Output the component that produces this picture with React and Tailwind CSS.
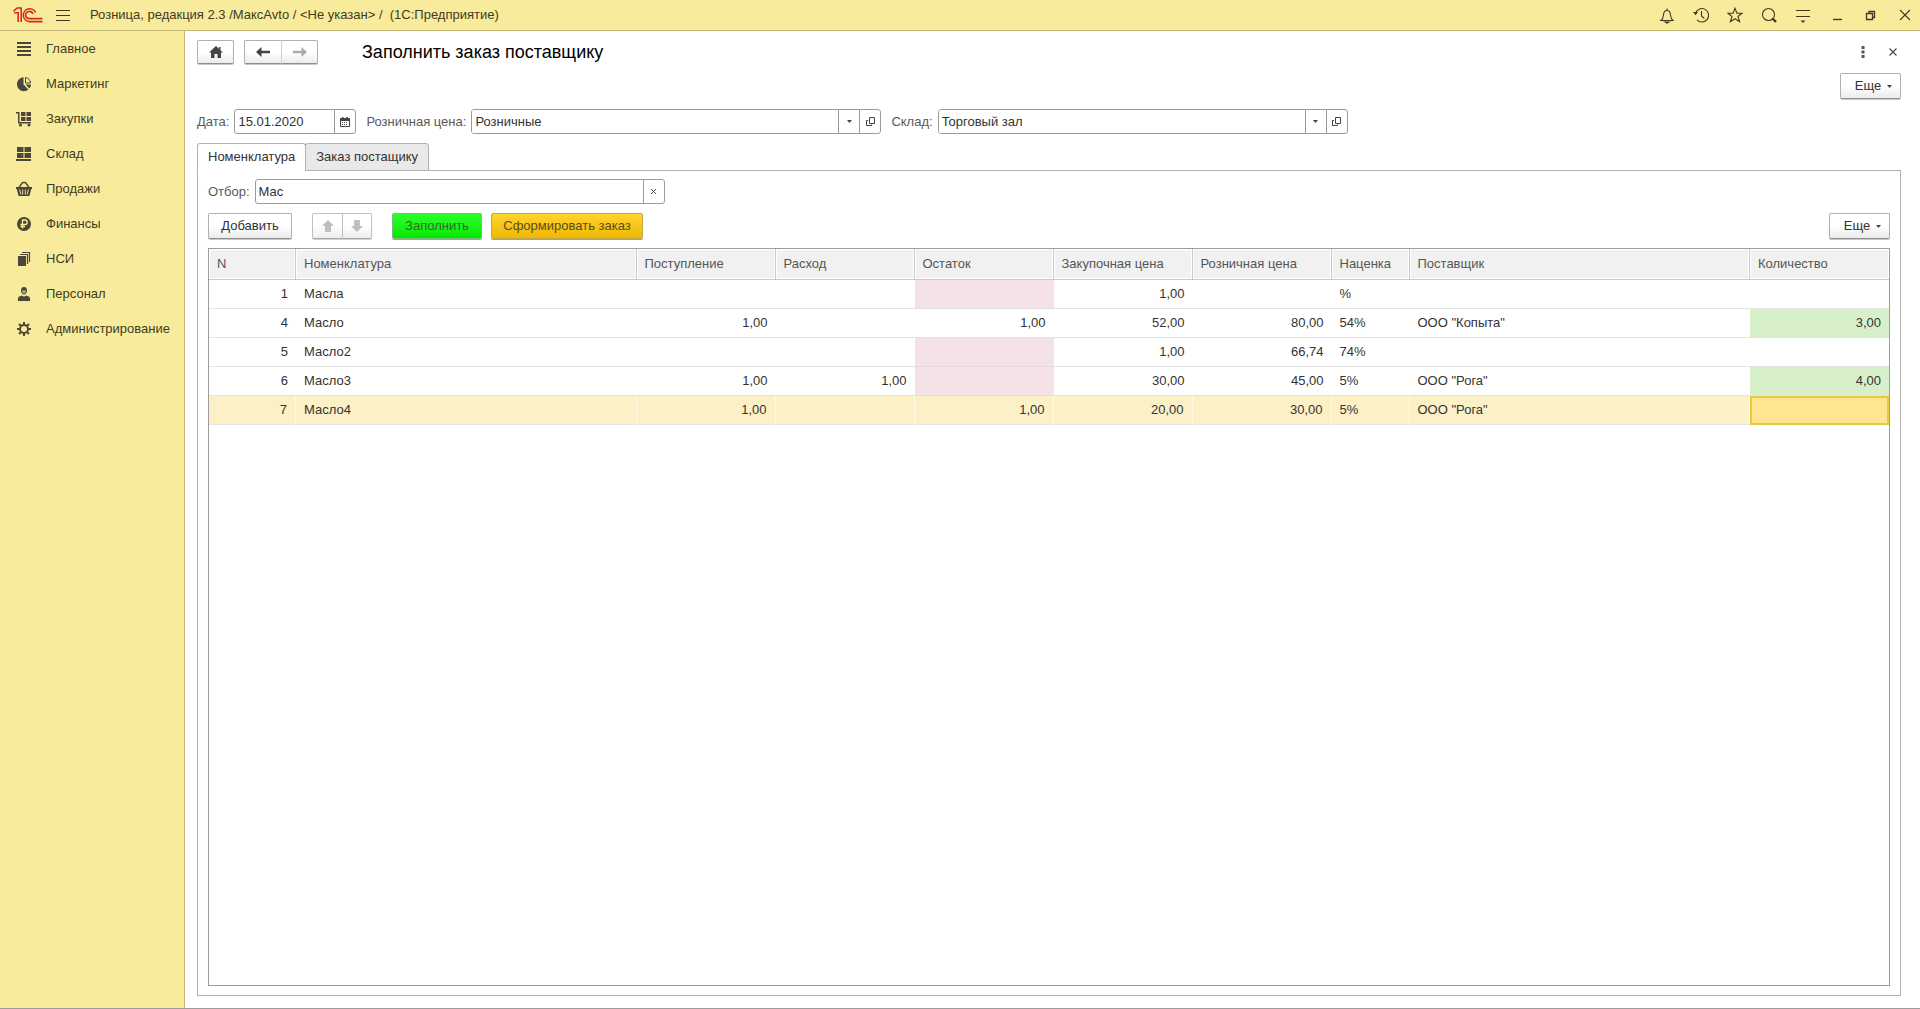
import React, { useState } from "react";

const NAV_ITEMS = [
  { id: "main", label: "Главное" },
  { id: "marketing", label: "Маркетинг" },
  { id: "purchases", label: "Закупки" },
  { id: "stock", label: "Склад" },
  { id: "sales", label: "Продажи" },
  { id: "finance", label: "Финансы" },
  { id: "nsi", label: "НСИ" },
  { id: "staff", label: "Персонал" },
  { id: "admin", label: "Администрирование" },
];

// Columns without a width share whatever space is left
const COLUMNS = [
  { key: "n", label: "N", width: "w-[87px]", num: true },
  { key: "name", label: "Номенклатура", width: "" },
  { key: "income", label: "Поступление", width: "w-[139px]", num: true },
  { key: "outcome", label: "Расход", width: "w-[139px]", num: true },
  { key: "rest", label: "Остаток", width: "w-[139px]", num: true },
  { key: "buy", label: "Закупочная цена", width: "w-[139px]", num: true },
  { key: "retail", label: "Розничная цена", width: "w-[139px]", num: true },
  { key: "markup", label: "Наценка", width: "w-[78px]" },
  { key: "vendor", label: "Поставщик", width: "" },
  { key: "qty", label: "Количество", width: "w-[139px]", num: true },
];

const ROWS = [
  { n: "1", name: "Масла", buy: "1,00", markup: "%" },
  { n: "4", name: "Масло", income: "1,00", rest: "1,00", buy: "52,00", retail: "80,00", markup: "54%", vendor: 'ООО "Копыта"', qty: "3,00" },
  { n: "5", name: "Масло2", buy: "1,00", retail: "66,74", markup: "74%" },
  { n: "6", name: "Масло3", income: "1,00", outcome: "1,00", buy: "30,00", retail: "45,00", markup: "5%", vendor: 'ООО "Рога"', qty: "4,00" },
  { n: "7", name: "Масло4", income: "1,00", rest: "1,00", buy: "20,00", retail: "30,00", markup: "5%", vendor: 'ООО "Рога"' },
];

const BTN =
  "flex items-center justify-center border border-[#b0b0b0] border-b-[#8f8f8f] bg-linear-to-b from-white from-50% to-[#ebebeb] shadow-[0_1px_0_#c8c8c8] cursor-pointer";

const FIELD = "flex h-[25px] items-stretch overflow-hidden rounded-[3px] border border-[#9c9c9c] bg-white";

function Logo() {
  return (
    <svg width="30" height="16" viewBox="0 0 30 16" fill="none" stroke="#d5281f" strokeWidth="1.6">
      <path d="M0.5 4.2 4.2 1H8.2V15" />
      <path d="M1.2 5.8H5.2V15" />
      <path d="M22.6 5.6A6.4 6.4 0 1 0 16.6 14.6H29.5" />
      <path d="M19.8 7A3.6 3.6 0 1 0 16.6 11.6H29.5" />
    </svg>
  );
}

function NavIcon({ id }) {
  const common = { width: 16, height: 16, viewBox: "0 0 16 16", fill: "#4b4739", "aria-hidden": true };
  switch (id) {
    case "main":
      return (
        <svg {...common}>
          <path d="M1 1h14v2H1zM1 5h14v2H1zM1 9h14v2H1zM1 13h14v2H1z" />
        </svg>
      );
    case "marketing":
      return (
        <svg {...common}>
          <path d="M7.5 1.2V8.6L12.4 13.6A7 7 0 1 1 7.500 1.200z" />
          <path d="M9.500 1.500A6 6 0 0 1 14.500 7H9.500z" fill="none" stroke="#4b4739" />
          <path d="M9.500 8.500H15A6.500 6.500 0 0 1 13.400 12.500z" />
        </svg>
      );
    case "purchases":
      return (
        <svg {...common}>
          <path d="M0 1h3.500v10H15v1.500H2V2.500H0z" />
          <path d="M5 1h4.500v4H5zM10.500 1H15v4h-4.500zM5 6h4.500v4H5zM10.500 6H15v4h-4.500z" />
          <circle cx="4.500" cy="14" r="1.500" />
          <circle cx="13" cy="14" r="1.500" />
        </svg>
      );
    case "stock":
      return (
        <svg {...common}>
          <path d="M1 1h6.500v5H1zM8.500 1H15v5H8.500zM1 7h6.500v5H1zM8.500 7H15v5H8.500zM0 13h15v2H0z" />
        </svg>
      );
    case "sales":
      return (
        <svg {...common}>
          <path d="M0 6h16v2h-.800L13.500 15h-11L.800 8H0z" />
          <path d="M3 6.500 6.500 1.500h3L13 6.500" fill="none" stroke="#4b4739" strokeWidth="1.400" />
          <path d="M3.500 8.500 5 13.500M6.700 8.500V13.500M9.300 8.500V13.500M12.500 8.500 11 13.500" stroke="#f9eb9c" strokeWidth="0.900" />
        </svg>
      );
    case "finance":
      return (
        <svg {...common}>
          <circle cx="8" cy="8" r="7" />
          <path d="M6.500 12.500V4H9a2.200 2.200 0 0 1 0 4.500H4.500M4.500 10.500H9" fill="none" stroke="#f9eb9c" strokeWidth="1.300" />
        </svg>
      );
    case "nsi":
      return (
        <svg {...common}>
          <path d="M2 5h8v10H2z" />
          <path d="M4 3.500h7.500V13M6 1.500h7.500V11" fill="none" stroke="#4b4739" strokeWidth="1.200" />
        </svg>
      );
    case "staff":
      return (
        <svg {...common}>
          <path d="M8 1C6 1 5 2.400 5 4.500S6.400 8.500 8 8.500s3-1.900 3-4S10 1 8 1z" />
          <path d="M6 4.500h4C10 6.500 9 7.600 8 7.600S6 6.500 6 4.500z" fill="#b5ac78" />
          <path d="M2 15v-2.500C2 10.500 4 10 6 9.500l2 1.200 2-1.200c2 .500 4 1 4 3V15z" />
        </svg>
      );
    default:
      return (
        <svg {...common} fill="none" stroke="#4b4739">
          <circle cx="8" cy="8" r="4" strokeWidth="2" />
          <path
            d="M8 1v2.500M8 12.500V15M1 8h2.500M12.500 8H15M3 3l1.800 1.800M11.200 11.200 13 13M3 13l1.800-1.800M11.200 4.800 13 3"
            strokeWidth="2"
          />
        </svg>
      );
  }
}

// Thin line icons on the right of the title bar
const TITLE_ICONS = [
  {
    label: "Уведомления",
    path: (
      <>
        <path d="M2 13.500h12c-2-1.500-2.300-3-2.500-5.500C11.300 5 10.500 3.500 8 3.500S4.700 5 4.500 8C4.300 10.500 4 12 2 13.500zM8 3.500V1.500" />
        <path d="M6 15h4l-2 1.200z" fill="#3f3b20" />
      </>
    ),
  },
  {
    label: "История",
    path: (
      <>
        <path d="M2.600 6A6.700 6.700 0 1 1 4 12.800M8.500 4v5l2.800 2.500" />
        <path d="M0 5h5L2.600 8.200z" fill="#3f3b20" stroke="none" />
      </>
    ),
  },
  { label: "Избранное", path: <path d="M8 1.200l1.900 5h5.300l-4.200 3.300 1.600 5.300L8 11.700l-4.600 3.100L5 9.500.800 6.200h5.300z" /> },
  {
    label: "Поиск",
    path: (
      <>
        <circle cx="7.500" cy="7.500" r="6" />
        <path d="M11.500 11.500 15 15" strokeWidth="2.400" />
      </>
    ),
  },
  {
    label: "Настройки панели",
    path: (
      <>
        <path d="M1 3.500h14M1 9.500h14" />
        <path d="M5.500 13.500h5L8 16z" fill="#3f3b20" stroke="none" />
      </>
    ),
  },
  { label: "Свернуть", path: <path d="M4 12.500h9" strokeWidth="1.400" /> },
  { label: "Восстановить", path: <path d="M3.500 6.500h6v6h-6zM6 6V4.500h5.500v6H10" strokeWidth="1.300" /> },
  { label: "Закрыть", path: <path d="M3 3l10 10M13 3 3 13" /> },
];

function Caret() {
  return (
    <svg width="5" height="3" viewBox="0 0 5 3" fill="#444" aria-hidden="true">
      <path d="M0 0h5L2.500 3z" />
    </svg>
  );
}

function OpenIcon() {
  return (
    <svg width="11" height="11" viewBox="0 0 11 11" fill="none" stroke="#444" aria-hidden="true">
      <path d="M4.500 1.500h5v6h-5zM3 4.500H1.500v5h5V8.500" />
    </svg>
  );
}

function Arrow({ className = "" }) {
  return (
    <svg className={className} width="14" height="10" viewBox="0 0 14 10" fill="currentColor" aria-hidden="true">
      <path d="M0 5 5.500 0V3.800H14V6.200H5.500V10z" />
    </svg>
  );
}

function BlockArrow({ className = "" }) {
  return (
    <svg className={className} width="12" height="12" viewBox="0 0 12 12" fill="#a9b1b8" aria-hidden="true">
      <path d="M6 0 12 6H9v6H3V6H0z" />
    </svg>
  );
}

function MoreButton() {
  return (
    <button type="button" className={`${BTN} h-[26px] w-[61px] gap-[6px] rounded-[2px] pl-[6px]`}>
      Еще
      <Caret />
    </button>
  );
}

function SelectField({ id, label, value }) {
  return (
    <div className="flex items-center">
      <label htmlFor={id} className="w-max pr-[5px] text-[#5a5a5a]">
        {label}
      </label>
      <div className={`${FIELD} w-[410px]`}>
        <div className="relative flex flex-1">
          <select id={id} defaultValue={value} className="w-full appearance-none bg-white pl-[3px] outline-none">
            <option>{value}</option>
          </select>
          <span className="pointer-events-none absolute inset-y-0 right-0 flex w-[21px] items-center justify-center border-l border-[#9c9c9c]">
            <Caret />
          </span>
        </div>
        <button type="button" aria-label="Открыть" className="flex w-[21px] items-center justify-center border-l border-[#9c9c9c]">
          <OpenIcon />
        </button>
      </div>
    </div>
  );
}

function TitleBar() {
  return (
    <header className="flex h-[31px] shrink-0 items-center border-b border-[#c3b878] bg-[#f9eb9c] pl-[13px] pr-[7px]">
      <Logo />
      <button type="button" aria-label="Меню" className="ml-[13px] flex w-[14px] flex-col gap-1">
        <span className="h-px bg-[#3f3b20]" />
        <span className="h-px bg-[#3f3b20]" />
        <span className="h-px bg-[#3f3b20]" />
      </button>
      <span className="ml-5 whitespace-pre text-[#3f3b20]">
        {"Розница, редакция 2.3 /МаксAvto / <Не указан> /  (1С:Предприятие)"}
      </span>
      <div className="ml-auto flex gap-[18px]">
        {TITLE_ICONS.map((icon) => (
          <button key={icon.label} type="button" aria-label={icon.label}>
            <svg width="16" height="17" viewBox="0 0 16 17" fill="none" stroke="#3f3b20" strokeWidth="1.100">
              {icon.path}
            </svg>
          </button>
        ))}
      </div>
    </header>
  );
}

function Sidebar() {
  return (
    <nav className="w-[185px] shrink-0 border-r border-[#c3b878] bg-[#f9eb9c]">
      {NAV_ITEMS.map((item) => (
        <a key={item.id} href={`#${item.id}`} className="flex h-[35px] items-center gap-[14px] pl-4 text-[#3f3b20]">
          <NavIcon id={item.id} />
          {item.label}
        </a>
      ))}
    </nav>
  );
}

function cellClass(row, col, active) {
  if (active) {
    return col.key === "qty"
      ? "border-b border-[#e4e4e4] bg-[#ffe58f] outline-2 -outline-offset-2 outline-[#e8c83e]"
      : "border-b border-r border-b-[#e4e4e4] border-r-[#fffbe9] bg-[#fcf1c6]";
  }
  if (col.key === "rest" && !row.rest) return "border-b border-[#e4dde0] bg-[#f4e2e8]";
  if (col.key === "qty" && row.qty) return "border-b border-[#dcebd5] bg-[#d7f0c9]";
  return "border-b border-[#e4e4e4]";
}

function GoodsTable() {
  const [activeRow, setActiveRow] = useState("7");

  return (
    <div className="mt-[9px] flex-1 border border-[#9c9c9c]">
      <table className="w-full table-fixed border-separate border-spacing-0">
        <thead>
          <tr>
            {COLUMNS.map((col) => (
              <th
                key={col.key}
                scope="col"
                className={`${col.width} h-[31px] border-b border-r border-[#c9c9c9] bg-[#f1f1f1] px-2 text-left font-normal text-[#555] shadow-[inset_0_0_0_1px_#fff] last:border-r-0`}
              >
                {col.label}
              </th>
            ))}
          </tr>
        </thead>
        <tbody>
          {ROWS.map((row) => (
            <tr key={row.n} onClick={() => setActiveRow(row.n)}>
              {COLUMNS.map((col) => (
                <td
                  key={col.key}
                  className={`h-[29px] px-2 ${col.num ? "text-right" : ""} ${cellClass(row, col, row.n === activeRow)}`}
                >
                  {row[col.key]}
                </td>
              ))}
            </tr>
          ))}
        </tbody>
      </table>
    </div>
  );
}

export default function App() {
  const [tab, setTab] = useState("goods");
  const [filter, setFilter] = useState("Мас");

  return (
    <div className="flex h-screen flex-col border-b border-[#9c9c9c] bg-white font-['Liberation_Sans',Arial,sans-serif] text-[13px] leading-4 text-[#333]">
      <TitleBar />
      <div className="flex min-h-0 flex-1">
        <Sidebar />

        <main className="flex min-w-0 flex-1 flex-col px-3 pb-3 pr-[19px] pt-2">
          {/* Form header */}
          <div className="flex h-[25px] items-center">
            <button type="button" aria-label="Домой" className={`${BTN} h-6 w-[37px] rounded-[2px]`}>
              <svg width="14" height="12" viewBox="0 0 14 12" fill="#444" aria-hidden="true">
                <path d="M7 0 0 6.500H2V12H5.500V8H8.500v4H12V6.500h2L11.500 4.200V1H10V2.800z" />
              </svg>
            </button>
            <div className="ml-[10px] flex">
              <button type="button" aria-label="Назад" className={`${BTN} h-6 w-[38px] rounded-l-[2px] border-r-[#d0d0d0] text-[#444]`}>
                <Arrow />
              </button>
              <button type="button" aria-label="Вперед" className={`${BTN} h-6 w-[36px] rounded-r-[2px] border-l-0 text-[#aaa]`}>
                <Arrow className="rotate-180" />
              </button>
            </div>
            <h1 className="ml-11 text-[18px] leading-6 text-black">Заполнить заказ поставщику</h1>
            <div className="ml-auto flex items-center gap-[24px] pr-1">
              <button type="button" aria-label="Действия">
                <svg width="4" height="12" viewBox="0 0 4 12" fill="#555" aria-hidden="true">
                  <path d="M.500 0h3v3h-3zM.500 4.500h3v3h-3zM.500 9h3v3h-3z" />
                </svg>
              </button>
              <button type="button" aria-label="Закрыть форму">
                <svg width="8" height="8" viewBox="0 0 8 8" stroke="#444" strokeWidth="1.100" aria-hidden="true">
                  <path d="M.500.500l7 7M7.500.500l-7 7" />
                </svg>
              </button>
            </div>
          </div>

          <div className="mt-[9px] flex justify-end">
            <MoreButton />
          </div>

          {/* Order parameters */}
          <div className="mt-[10px] flex items-center gap-[10px]">
            <div className="flex items-center">
              <label htmlFor="date" className="pr-[5px] text-[#5a5a5a]">
                Дата:
              </label>
              <div className={`${FIELD} w-[122px]`}>
                <input id="date" type="text" defaultValue="15.01.2020" className="min-w-0 flex-1 pl-[3px] outline-none" />
                <button type="button" aria-label="Выбрать дату" className="flex w-[21px] items-center justify-center border-l border-[#9c9c9c]">
                  <svg width="10" height="10" viewBox="0 0 10 10" aria-hidden="true">
                    <path d="M.500 1.500h9v8h-9z" fill="none" stroke="#444" />
                    <path d="M0 1h10v3H0zM2 0h1.500v2H2zM6.500 0H8v2H6.500z" fill="#444" />
                    <path d="M2 5h1v1H2zM4 5h1v1H4zM6 5h1v1H6zM2 7h1v1H2zM4 7h1v1H4zM6 7h1v1H6z" fill="#444" />
                  </svg>
                </button>
              </div>
            </div>
            <SelectField id="price" label="Розничная цена:" value="Розничные" />
            <SelectField id="store" label="Склад:" value="Торговый зал" />
          </div>

          {/* Tabs sit over the top border of the panel */}
          <div role="tablist" className="relative mt-[9px] flex h-7 items-stretch">
            {[
              { id: "goods", label: "Номенклатура" },
              { id: "order", label: "Заказ постащику" },
            ].map((t) => (
              <button
                key={t.id}
                type="button"
                role="tab"
                aria-selected={tab === t.id}
                onClick={() => setTab(t.id)}
                className={`-mr-px rounded-t-[3px] border border-[#b0b0b0] px-[10px] ${
                  tab === t.id ? "border-b-white bg-white" : "bg-[#e9e9e9]"
                }`}
              >
                {t.label}
              </button>
            ))}
          </div>

          <section className="-mt-px flex min-h-0 flex-1 flex-col border border-[#b0b0b0] px-[10px] pb-[9px] pt-2">
            <div className="flex items-center">
              <label htmlFor="filter" className="pr-[5px] text-[#5a5a5a]">
                Отбор:
              </label>
              <div className={`${FIELD} w-[410px]`}>
                <input
                  id="filter"
                  type="text"
                  value={filter}
                  onChange={(e) => setFilter(e.target.value)}
                  className="min-w-0 flex-1 pl-[3px] outline-none"
                />
                <button
                  type="button"
                  aria-label="Очистить"
                  onClick={() => setFilter("")}
                  className="flex w-[21px] items-center justify-center border-l border-[#9c9c9c]"
                >
                  <svg width="5" height="5" viewBox="0 0 5 5" stroke="#444" aria-hidden="true">
                    <path d="M0 0l5 5M5 0 0 5" />
                  </svg>
                </button>
              </div>
            </div>

            <div className="mt-[9px] flex items-center">
              <button type="button" className={`${BTN} h-[26px] w-[84px] rounded-[2px]`}>
                Добавить
              </button>
              <div className="ml-5 flex opacity-80">
                <button type="button" aria-label="Вверх" className={`${BTN} h-[26px] w-[31px] rounded-l-[2px]`}>
                  <BlockArrow />
                </button>
                <button type="button" aria-label="Вниз" className={`${BTN} h-[26px] w-[29px] rounded-r-[2px] border-l-0`}>
                  <BlockArrow className="rotate-180" />
                </button>
              </div>
              <button
                type="button"
                className="ml-5 h-[26px] w-[90px] rounded-[2px] border border-[#7fb87f] bg-linear-to-b from-[#2aff2a] to-[#00e800] text-[#2d6b1c] shadow-[0_1px_0_#8fae8f]"
              >
                Заполнить
              </button>
              <button
                type="button"
                className="ml-[9px] h-[26px] w-[152px] rounded-[2px] border border-[#c2a84a] bg-linear-to-b from-[#ffd42a] to-[#efb800] text-[#5e4c10] shadow-[0_1px_0_#b3a26a]"
              >
                Сформировать заказ
              </button>
              <div className="ml-auto">
                <MoreButton />
              </div>
            </div>

            <GoodsTable />
          </section>
        </main>
      </div>
    </div>
  );
}
